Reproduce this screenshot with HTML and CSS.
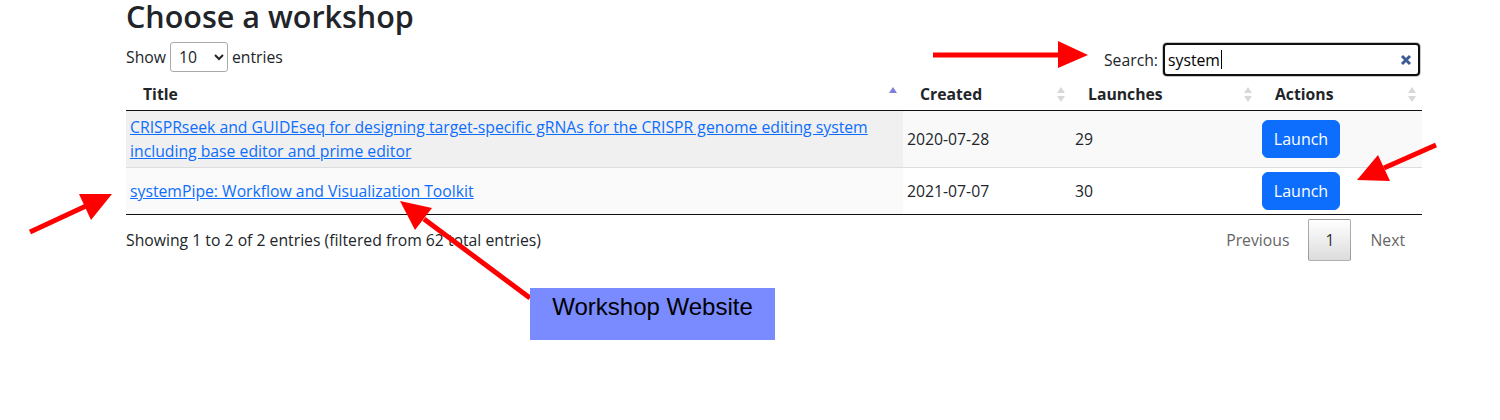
FILE: index.html
```html
<!DOCTYPE html>
<html lang="en">
<head>
<meta charset="utf-8">
<title>Choose a workshop</title>
<link rel="stylesheet" href="styles.css">
</head>
<body>
<main class="page">
  <h2 class="title">Choose a workshop</h2>

  <div class="dt-top">
    <label class="dt-length">Show
      <select class="dt-select"><option>10</option><option>25</option><option>50</option><option>100</option></select>
      entries</label>
    <div class="dt-search">
      <span class="dt-search-label">Search:</span>
      <div class="search-field">
        <span class="search-text">system</span><span class="caret"></span>
        <span class="search-fill"></span>
        <svg class="clear" width="12" height="12" viewBox="0 0 12 12"><path d="M2 2 L10 10 M10 2 L2 10" stroke="#3d5c97" stroke-width="3" stroke-linecap="butt"/></svg>
      </div>
    </div>
  </div>

  <table class="dt">
    <colgroup>
      <col class="c-title"><col class="c-created"><col class="c-launches"><col class="c-actions">
    </colgroup>
    <thead>
      <tr>
        <th><div class="th"><span>Title</span><span class="sort asc"><i class="up"></i><i class="down"></i></span></div></th>
        <th><div class="th"><span>Created</span><span class="sort"><i class="up"></i><i class="down"></i></span></div></th>
        <th><div class="th"><span>Launches</span><span class="sort"><i class="up"></i><i class="down"></i></span></div></th>
        <th><div class="th"><span>Actions</span><span class="sort"><i class="up"></i><i class="down"></i></span></div></th>
      </tr>
    </thead>
    <tbody>
      <tr class="odd">
        <td class="sorted"><a href="#">CRISPRseek and GUIDEseq for designing target-specific gRNAs for the CRISPR genome editing system including base editor and prime editor</a></td>
        <td>2020-07-28</td>
        <td>29</td>
        <td><button class="btn">Launch</button></td>
      </tr>
      <tr class="even">
        <td class="sorted"><a href="#">systemPipe: Workflow and Visualization Toolkit</a></td>
        <td>2021-07-07</td>
        <td>30</td>
        <td><button class="btn">Launch</button></td>
      </tr>
    </tbody>
  </table>

  <div class="dt-bottom">
    <div class="dt-info">Showing 1 to 2 of 2 entries (filtered from 62 total entries)</div>
    <div class="dt-paginate">
      <span class="pg disabled">Previous</span>
      <span class="pg current">1</span>
      <span class="pg disabled">Next</span>
    </div>
  </div>
</main>

<svg class="annotations" width="1500" height="420" viewBox="0 0 1500 420">
  <g fill="#ff0000" stroke="#ff0000" stroke-width="5">
    <line x1="933" y1="55" x2="1060" y2="55"/>
    <polygon stroke="none" points="1088,55 1058,41 1058,68"/>

    <line x1="1436" y1="145" x2="1384" y2="168"/>
    <polygon stroke="none" points="1357,180 1390,181 1378,155"/>

    <line x1="30" y1="232" x2="86" y2="206"/>
    <polygon stroke="none" points="112,194 79,194 91,220"/>

    <line x1="530" y1="298" x2="424" y2="219"/>
    <polygon stroke="none" points="400,201 432,208 415,230"/>
  </g>
</svg>
<div class="callout">Workshop Website</div>
</body>
</html>
```
FILE: styles.css
```css
html, body {
  margin: 0;
  padding: 0;
  background: #ffffff;
}

body {
  font-family: "Open Sans", "Noto Sans", sans-serif;
  font-size: 15.75px;
  line-height: 24px;
  color: #212529;
  position: relative;
  width: 1500px;
  height: 420px;
  overflow: hidden;
}

.page {
  margin-left: 126px;
  width: 1296px;
}

.title {
  margin: 0;
  font-size: 30.5px;
  font-weight: 600;
  line-height: 32px;
  color: #212529;
}

/* ---------- top controls ---------- */
.dt-top {
  display: flex;
  justify-content: space-between;
  align-items: flex-start;
  margin-top: 10px;
  height: 38px;
}

.dt-length {
  display: flex;
  align-items: center;
  gap: 4px;
  height: 30px;
}

.dt-select {
  width: 58px;
  height: 30px;
  padding: 0 0 0 4px;
  margin: 0;
  font-family: inherit;
  font-size: 15.75px;
  color: #212529;
  background: #fff;
  border: 1px solid #aaa;
  border-radius: 3px;
}

.dt-search {
  display: flex;
  align-items: center;
  gap: 5px;
  margin-top: 1px;
  margin-right: 2px;
  height: 33px;
}

.dt-search-label {
  margin-left: 2px;
}

.search-field {
  box-sizing: border-box;
  width: 257px;
  height: 33px;
  display: flex;
  align-items: center;
  padding: 0 6px 0 3px;
  border: 2px solid #101010;
  border-radius: 4px;
  box-shadow: 0 0 0 1px #c8c8c8;
  background: #fff;
  color: #000;
}

.search-text {
  line-height: 24px;
}

.caret {
  width: 1px;
  height: 19px;
  background: #000;
  margin-left: 1px;
}

.search-fill {
  flex: 1;
}

.clear {
  display: block;
}

/* ---------- table ---------- */
.dt {
  width: 1296px;
  table-layout: fixed;
  border-collapse: separate;
  border-spacing: 0;
}

.c-title { width: 777px; }
.c-created { width: 168px; }
.c-launches { width: 187px; }
.c-actions { width: 164px; }

.dt th {
  text-align: left;
  font-weight: 700;
  padding: 2px 6px 4px 17px;
  border-bottom: 1px solid #111;
  line-height: 24px;
}

.th {
  display: flex;
  justify-content: space-between;
  align-items: center;
}

.sort {
  display: flex;
  flex-direction: column;
  gap: 3px;
  margin-top: 1px;
}

.sort i {
  display: block;
  width: 0;
  height: 0;
  border-left: 4px solid transparent;
  border-right: 4px solid transparent;
}

.sort .up { border-bottom: 6px solid #d8d8d8; }
.sort .down { border-top: 6px solid #d8d8d8; }

.sort.asc .up { border-bottom-color: #7f7fdf; }
.sort.asc .down { border-top-color: transparent; }

.dt td {
  padding: 4px;
  vertical-align: middle;
  line-height: 24px;
}

.dt tr.odd td { background: #f9f9f9; }
.dt tr.odd td.sorted { background: #f0f0f0; }
.dt tr.even td { background: #ffffff; border-top: 1px solid #dddddd; border-bottom: 1px solid #111; }
.dt tr.even td.sorted { background: #fafafa; }

.dt a {
  color: #0d6efd;
  text-decoration: underline;
}

.btn {
  display: block;
  box-sizing: border-box;
  height: 38px;
  width: 78px;
  padding: 0;
  font-family: inherit;
  font-size: 16px;
  color: #fff;
  background: #0d6efd;
  border: 1px solid #0d6efd;
  border-radius: 6px;
}

/* ---------- bottom ---------- */
.dt-bottom {
  display: flex;
  justify-content: space-between;
  align-items: center;
  padding-top: 4px;
  height: 42px;
}

.dt-paginate {
  display: flex;
  align-items: center;
}

.pg {
  box-sizing: border-box;
  padding: 8px 16px;
  line-height: 24px;
  border: 1px solid transparent;
  border-radius: 2px;
  margin-left: 2px;
  color: #333;
}

.pg.disabled {
  color: #666;
}

.pg.current {
  border-color: rgba(0, 0, 0, 0.3);
  background: linear-gradient(to bottom, #ffffff 0%, #dcdcdc 100%);
}

/* ---------- annotations ---------- */
.annotations {
  position: absolute;
  left: 0;
  top: 0;
  pointer-events: none;
}

.callout {
  position: absolute;
  left: 530px;
  top: 288px;
  width: 245px;
  height: 52px;
  box-sizing: border-box;
  padding-top: 5px;
  background: #7a8bff;
  color: #000;
  font-family: "Liberation Sans", Arial, sans-serif;
  font-size: 24px;
  line-height: 28px;
  text-align: center;
}
```
